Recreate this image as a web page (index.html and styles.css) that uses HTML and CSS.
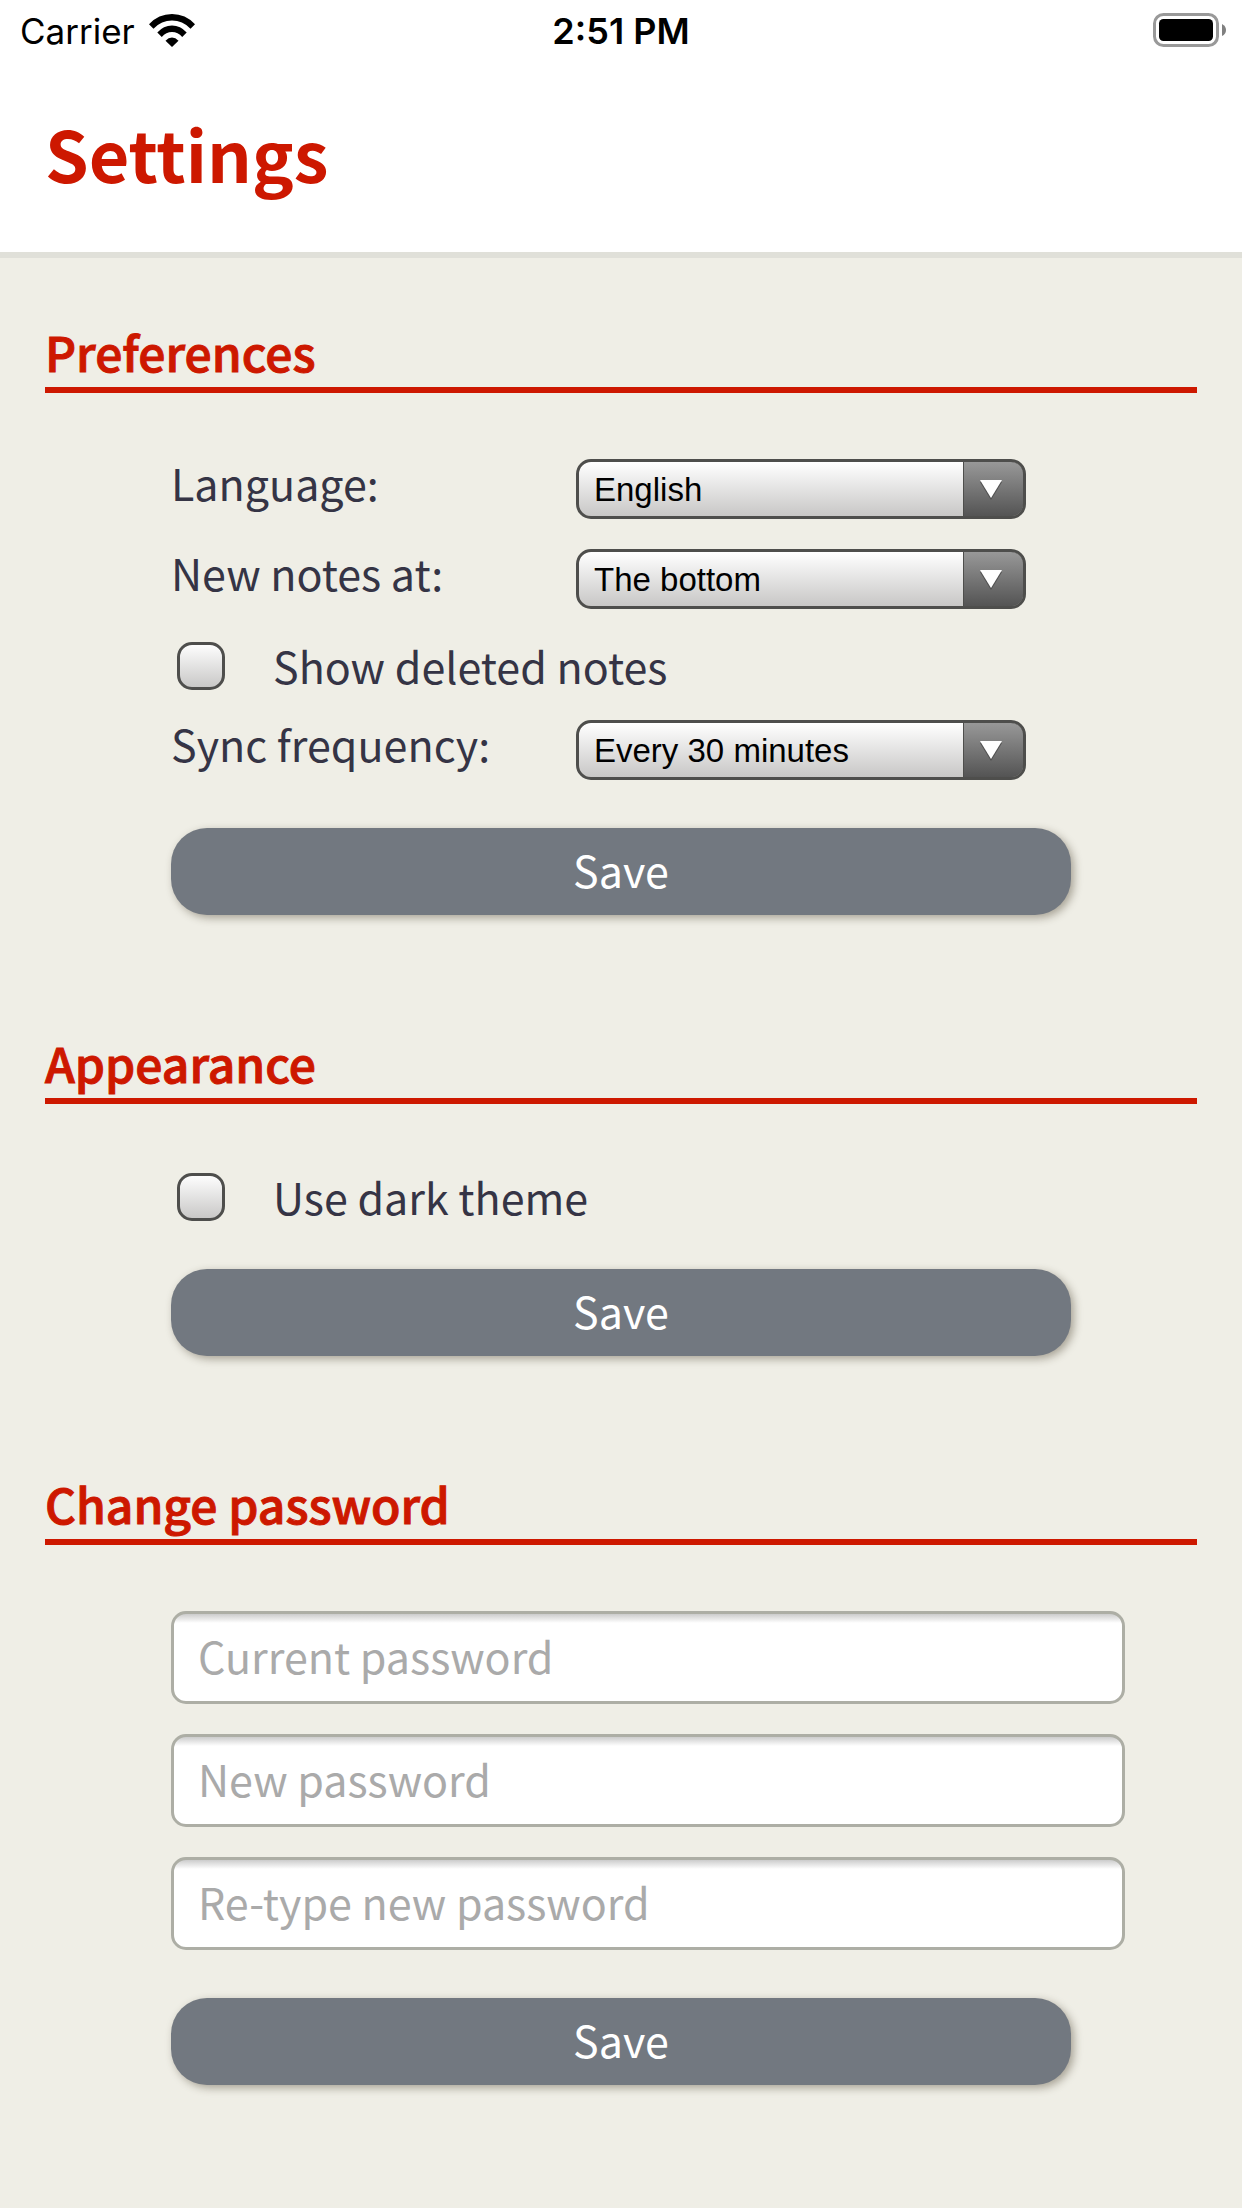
FILE: index.html
```html
<!DOCTYPE html>
<html lang="en">
<head>
<meta charset="utf-8">
<meta name="viewport" content="width=device-width, initial-scale=1">
<title>Settings</title>
<link rel="stylesheet" href="styles.css">
</head>
<body>
<header class="header">
  <div class="status">
    <div class="status-carrier">
      <span class="status-text">Carrier</span>
      <svg class="wifi" viewBox="0 0 46 33" aria-hidden="true">
        <path d="M0 10.200Q9.500 0 23 0T46 10.200L41.500 14.700Q33.500 6.600 23 6.600T4.500 14.700Z"/>
        <path d="M8.300 18.500Q14.500 11.500 23 11.500T37.700 18.500L33.200 23Q29 18 23 18T12.800 23Z"/>
        <path d="M16.500 26.700Q19.500 23.500 23 23.500T29.500 26.700L23 33Z"/>
      </svg>
    </div>
    <span class="status-text status-time">2:51 PM</span>
    <svg class="battery" viewBox="0 0 73 34" aria-hidden="true">
      <rect class="battery-shell" x="1.500" y="1.500" width="63" height="31" rx="9"/>
      <rect x="6" y="6" width="54" height="22" rx="4.500"/>
      <path class="battery-cap" d="M69 11Q73 13 73 17T69 23Z"/>
    </svg>
  </div>
  <h1 class="title">Settings</h1>
</header>
<main class="main">
  <section class="section">
    <h2 class="section-title">Preferences</h2>
    <form class="form">
      <div class="field">
        <label class="label" for="language">Language:</label>
        <div class="select-box">
          <select class="select" id="language"><option>English</option></select>
          <svg class="arrow" viewBox="0 0 22 20" aria-hidden="true"><path class="arrow-shadow" d="M0 2H22L11 20Z"/><path d="M0 0H22L11 18Z"/></svg>
        </div>
      </div>
      <div class="field">
        <label class="label" for="position">New notes at:</label>
        <div class="select-box">
          <select class="select" id="position"><option>The bottom</option></select>
          <svg class="arrow" viewBox="0 0 22 20" aria-hidden="true"><path class="arrow-shadow" d="M0 2H22L11 20Z"/><path d="M0 0H22L11 18Z"/></svg>
        </div>
      </div>
      <div class="check">
        <input class="checkbox" type="checkbox" id="deleted">
        <label class="label" for="deleted">Show deleted notes</label>
      </div>
      <div class="field">
        <label class="label" for="sync">Sync frequency:</label>
        <div class="select-box">
          <select class="select" id="sync"><option>Every 30 minutes</option></select>
          <svg class="arrow" viewBox="0 0 22 20" aria-hidden="true"><path class="arrow-shadow" d="M0 2H22L11 20Z"/><path d="M0 0H22L11 18Z"/></svg>
        </div>
      </div>
      <button class="button" type="button">Save</button>
    </form>
  </section>
  <section class="section">
    <h2 class="section-title">Appearance</h2>
    <form class="form">
      <div class="check">
        <input class="checkbox" type="checkbox" id="dark">
        <label class="label" for="dark">Use dark theme</label>
      </div>
      <button class="button" type="button">Save</button>
    </form>
  </section>
  <section class="section">
    <h2 class="section-title">Change password</h2>
    <form class="form">
      <input class="input" type="password" placeholder="Current password" aria-label="Current password">
      <input class="input" type="password" placeholder="New password" aria-label="New password">
      <input class="input" type="password" placeholder="Re-type new password" aria-label="Re-type new password">
      <button class="button" type="button">Save</button>
    </form>
  </section>
</main>
</body>
</html>
```
FILE: styles.css
```css
* {
  box-sizing: border-box;
}

body {
  margin: 0;
  background: #efeee6;
  color: #353445;
  font-family: "Noto Sans CJK JP", "Noto Sans", sans-serif;
  font-size: 43px;
  line-height: 46px;
}

.header {
  background: #fff;
  border-bottom: 6px solid #e0e0d9;
}

.status {
  display: grid;
  grid-template-columns: 1fr auto 1fr;
  align-items: center;
  height: 60px;
  padding: 0 16px;
  color: #000;
  font-family: Inter, sans-serif;
  font-size: 35px;
}

.status-carrier {
  display: flex;
  align-items: center;
  gap: 14px;
  padding-left: 4px;
}

.status-text {
  padding-top: 2px;
}

.status-time {
  font-size: 36px;
  font-weight: 600;
}

.wifi {
  width: 46px;
  height: 33px;
}

.battery {
  width: 73px;
  height: 34px;
  justify-self: end;
}

.battery-shell {
  fill: none;
  stroke: #999;
  stroke-width: 3;
}

.battery-cap {
  fill: #808080;
}

.title {
  margin: 0;
  padding: 53px 45px 59px;
  color: #cd1800;
  font-size: 70px;
  font-weight: 700;
  line-height: 80px;
}

.main {
  display: flex;
  flex-direction: column;
  gap: 117px;
  padding: 63px 45px 117px;
}

.section-title {
  margin: 0;
  padding-bottom: 6px;
  border-bottom: 6px solid #cd1800;
  color: #cd1800;
  font-size: 48px;
  font-weight: 500;
  line-height: 60px;
  -webkit-text-stroke: 1px #cd1800;
}

.form {
  display: flex;
  flex-direction: column;
  gap: 30px;
  margin: 66px 126px 0;
}

.field {
  display: grid;
  grid-template-columns: 45% 50%;
  align-items: start;
}

.check {
  display: flex;
  align-items: start;
  gap: 48px;
  padding: 3px 6px 0;
}

.checkbox {
  appearance: none;
  width: 48px;
  height: 48px;
  margin: 0;
  border: 3px solid #4e4e4c;
  border-radius: 15px;
  background: linear-gradient(#fdfdfd, #c9c8c7);
}

.select-box {
  position: relative;
}

.select {
  appearance: none;
  display: block;
  width: 100%;
  height: 60px;
  padding: 0 72px 0 15px;
  border: 3px solid #4e4e4c;
  border-radius: 15px;
  background:
    linear-gradient(#989898, #545454) right / 59px 100% no-repeat,
    linear-gradient(#4e4e4c, #4e4e4c) right / 60px 100% no-repeat,
    linear-gradient(#fff, #c8c7c6);
  background-clip: padding-box;
  color: #000;
  font-family: "Liberation Sans", Arial, sans-serif;
  font-size: 33px;
}

.arrow {
  position: absolute;
  top: 21px;
  right: 24px;
  width: 22px;
  height: 20px;
  fill: #fff;
  pointer-events: none;
}

.arrow-shadow {
  fill: #505050;
}

.button {
  height: 87px;
  margin: 18px 0 0;
  padding: 0 0 6px;
  border: 0;
  border-radius: 36px;
  background: #727880;
  box-shadow: 3px 3px 9px rgba(60, 50, 30, 0.4);
  color: #fff;
  font: inherit;
}

.input {
  width: 106%;
  height: 93px;
  padding: 0 24px 6px;
  border: 3px solid #adaea5;
  border-radius: 15px;
  background: linear-gradient(#ccc, #fff 9px);
  color: #353445;
  font: inherit;
}

.input::placeholder {
  color: #aaa;
  opacity: 1;
}
```
